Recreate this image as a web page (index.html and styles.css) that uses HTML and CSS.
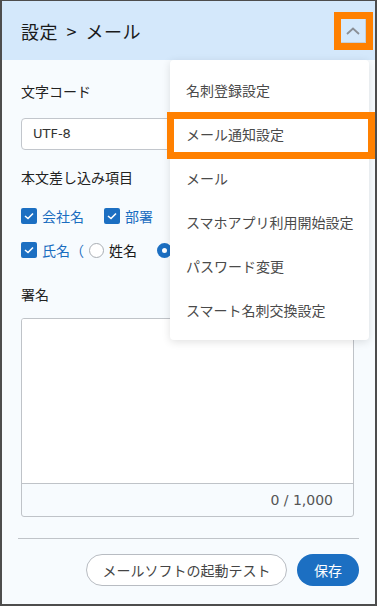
FILE: index.html
```html
<!doctype html>
<html>
	<head>
		<meta charset="utf-8">
		<title>設定 &gt; メール</title>
		<link rel="stylesheet" href="styles.css">
	</head>
	<body>
		<div class="window">
			<div class="header">
				<span class="title">設定 &gt; メール</span>
				<span class="toggle">
					<svg width="14" height="8" viewBox="0 0 14 8"><path d="M1 7 L7 1.5 L13 7" fill="none" stroke="#8a8f96" stroke-width="1.8"/></svg>
				</span>
				<span class="mark mark-toggle"></span>
			</div>

			<div class="content">
				<div class="label">文字コード</div>
				<div class="select">UTF-8</div>

				<div class="label">本文差し込み項目</div>
				<div class="checks">
					<label class="check"><span class="box"><svg width="10" height="8" viewBox="0 0 10 8"><path d="M1 4 L4 6.5 L9 1.5" fill="none" stroke="white" stroke-width="1.6"/></svg></span>会社名</label>
					<label class="check"><span class="box"><svg width="10" height="8" viewBox="0 0 10 8"><path d="M1 4 L4 6.5 L9 1.5" fill="none" stroke="white" stroke-width="1.6"/></svg></span>部署</label>
				</div>
				<div class="checks">
					<label class="check"><span class="box"><svg width="10" height="8" viewBox="0 0 10 8"><path d="M1 4 L4 6.5 L9 1.5" fill="none" stroke="white" stroke-width="1.6"/></svg></span>氏名（</label>
					<label class="radio"><span class="dot"></span>姓名</label>
					<label class="radio"><span class="dot on"></span></label>
				</div>

				<div class="label">署名</div>
				<div class="textarea">
					<div class="text-body"></div>
					<div class="counter">0 / 1,000</div>
				</div>
			</div>

			<div class="footer">
				<button class="btn btn-outline">メールソフトの起動テスト</button>
				<button class="btn btn-primary">保存</button>
			</div>

			<div class="menu">
				<div class="menu-item">名刺登録設定</div>
				<div class="menu-item">メール通知設定</div>
				<div class="menu-item">メール</div>
				<div class="menu-item">スマホアプリ利用開始設定</div>
				<div class="menu-item">パスワード変更</div>
				<div class="menu-item">スマート名刺交換設定</div>
			</div>
			<span class="mark mark-item"></span>
		</div>
	</body>
</html>
```

FILE: styles.css
```css
body {
	margin: 0;
	background: white;
	font-family: "Noto Sans CJK JP", "DejaVu Sans", sans-serif;
	font-size: 14px;
	color: #222;
}

.window {
	position: relative;
	box-sizing: border-box;
	width: 377px;
	height: 606px;
	border: 2px solid #4d4d4d;
	border-top-width: 1px;
	background: #f7fbfe;
	display: flex;
	flex-direction: column;
	overflow: hidden;
}

.header {
	position: relative;
	height: 59px;
	background: #d4e8fb;
	display: flex;
	align-items: center;
	justify-content: space-between;
	padding: 0 9px 0 19px;
	box-sizing: border-box;
}

.title {
	font-size: 18px;
	color: #1a1a1a;
	margin-top: 1px;
	word-spacing: 4px;
	letter-spacing: 0.5px;
}

.toggle {
	box-sizing: border-box;
	width: 26px;
	height: 25px;
	border: 1px solid #c4cfd9;
	background: #d4e8fb;
	display: flex;
	align-items: center;
	justify-content: center;
}

.content {
	flex: 1;
	padding: 20px 21px 0 19px;
}

.label {
	height: 22px;
	line-height: 22px;
}

.select {
	box-sizing: border-box;
	height: 32px;
	margin: 16px 0 16px;
	padding: 0 11px;
	line-height: 30px;
	border: 1px solid #c2c6cc;
	border-radius: 4px;
	background: white;
	font-family: "DejaVu Sans", sans-serif;
	font-size: 13px;
	color: #333;
}

.checks {
	display: flex;
	align-items: center;
	gap: 20px;
	height: 24px;
	margin-top: 10px;
	white-space: nowrap;
}

.label + .checks {
	margin-top: 16px;
}

.check {
	display: flex;
	align-items: center;
	gap: 5px;
	color: #1a6dc0;
}

.box {
	width: 16px;
	height: 16px;
	border-radius: 2px;
	background: #1c6fc2;
	display: flex;
	align-items: center;
	justify-content: center;
}

.radio {
	display: flex;
	align-items: center;
	gap: 5px;
	color: #1a1a1a;
	margin-left: -15px;
}

.radio + .radio {
	margin-left: 0;
}

.dot {
	box-sizing: border-box;
	width: 15px;
	height: 15px;
	border-radius: 50%;
	border: 1px solid #a8adb3;
	background: white;
}

.dot.on {
	border: 5px solid #1c6fc2;
}

.checks + .label {
	margin-top: 21px;
}

.textarea {
	box-sizing: border-box;
	margin-top: 13px;
	height: 199px;
	border: 1px solid #bfc3c8;
	border-radius: 3px;
	display: flex;
	flex-direction: column;
	overflow: hidden;
}

.text-body {
	flex: 1;
	background: white;
	border-bottom: 1px solid #bfc3c8;
}

.counter {
	height: 32px;
	line-height: 32px;
	text-align: right;
	padding-right: 20px;
	font-family: "DejaVu Sans", sans-serif;
	font-size: 14px;
	color: #555;
}

.footer {
	margin: 0 16px;
	padding: 15px 0 18px;
	border-top: 1px solid #c0c4c9;
	display: flex;
	justify-content: flex-end;
	gap: 10px;
}

.btn {
	height: 32px;
	border-radius: 16px;
	font-family: "Noto Sans CJK JP", sans-serif;
	font-size: 14px;
	padding: 0;
	white-space: nowrap;
}

.btn-outline {
	width: 201px;
	background: white;
	border: 1px solid #b8bcc2;
	color: #444;
}

.btn-primary {
	width: 62px;
	background: #1c6fc2;
	border: none;
	color: white;
}

.menu {
	position: absolute;
	left: 168px;
	top: 59px;
	width: 199px;
	padding: 8px 0;
	background: white;
	border-radius: 4px;
	box-shadow: 0 2px 8px rgba(0, 0, 0, 0.12);
}

.menu-item {
	height: 44px;
	line-height: 44px;
	padding-left: 16px;
	color: #4a4a4a;
	white-space: nowrap;
}

/* annotation highlights */
.mark {
	position: absolute;
	border: 7px solid #ff8000;
	box-sizing: border-box;
}

.mark-toggle {
	right: 2px;
	top: 11px;
	width: 39px;
	height: 38px;
}

.mark-item {
	left: 165px;
	top: 111px;
	width: 208px;
	height: 47px;
}
```
